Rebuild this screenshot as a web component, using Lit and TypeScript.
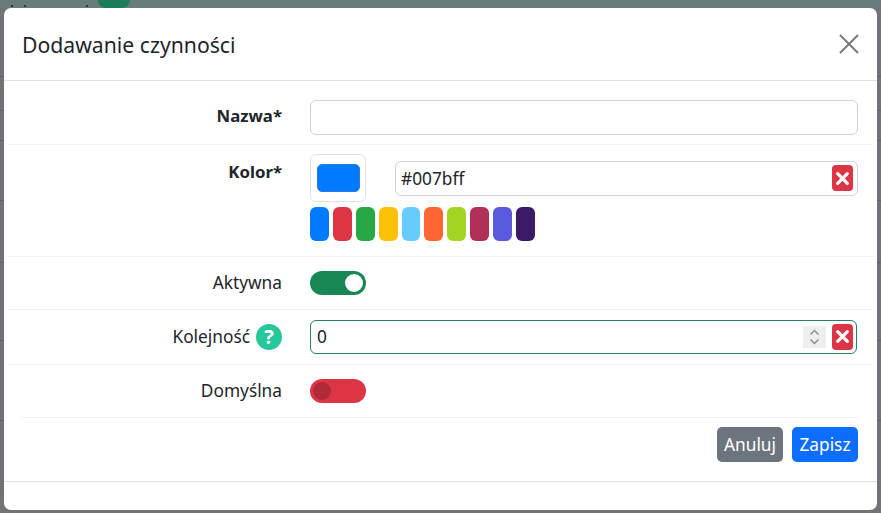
import { LitElement, html, css } from 'lit';
import { customElement } from 'lit/decorators.js';

const SWATCHES = [
  '#007bff', '#dc3545', '#28a745', '#ffc107', '#66ccff',
  '#ff6633', '#a3d323', '#b03058', '#5a5adf', '#3d1a66',
];

@customElement('app-root')
export class AppRoot extends LitElement {
  static styles = css`
    :host {
      display: block;
      position: relative;
      width: 881px;
      height: 513px;
      overflow: hidden;
      background: #717376;
      font-family: 'Noto Sans', 'Open Sans', sans-serif;
      color: #212529;
      font-size: 17.3px;
    }

    * {
      box-sizing: border-box;
    }

    .page-top {
      position: absolute;
      top: 0;
      left: 0;
      right: 0;
      height: 8px;
      background: #687c7c;
    }

    .page-pill {
      position: absolute;
      top: -10px;
      left: 98px;
      width: 32px;
      height: 18px;
      border-radius: 8px;
      background: #1a7d57;
    }

    .page-dot {
      position: absolute;
      top: 5px;
      width: 2px;
      height: 2px;
      background: #2c3436;
    }

    .page-line {
      position: absolute;
      left: 0;
      right: 0;
      height: 1px;
      background: #5f6163;
    }

    .backdrop {
      position: relative;
      height: 513px;
      padding: 8px 4px 3px 4px;
    }

    .modal {
      height: 100%;
      background: #fff;
      border-radius: 7px;
      display: flex;
      flex-direction: column;
    }

    .modal-header {
      height: 73px;
      flex: none;
      border-bottom: 1px solid #dee2e6;
      display: flex;
      align-items: center;
      justify-content: space-between;
      padding: 1px 17px 1px 18px;
    }

    .modal-title {
      font-size: 21.2px;
      font-weight: 400;
      margin: 0;
    }

    .close {
      width: 22px;
      height: 22px;
      display: block;
    }

    .modal-body {
      flex: 1;
      padding: 0 4px;
    }

    .row {
      display: grid;
      grid-template-columns: 274px 1fr;
      column-gap: 28px;
      border-bottom: 1px solid #eff1f3;
      padding-right: 15px;
    }

    .label {
      text-align: right;
      line-height: 24px;
    }

    .label.strong {
      font-size: 16.8px;
      font-weight: 700;
    }

    .row-name {
      height: 64px;
      padding-top: 19px;
      align-items: start;
    }

    .row-name .label {
      padding-top: 4px;
    }

    .input {
      height: 35px;
      border: 1px solid #ced4da;
      border-radius: 6px;
      background: #fff;
      padding: 0 6px;
      display: flex;
      align-items: center;
      color: #212529;
    }

    .row-color {
      height: 112px;
      padding-top: 9px;
    }

    .row-color .label {
      padding-top: 6px;
    }

    .color-top {
      display: flex;
      align-items: center;
      gap: 29px;
    }

    .color-btn {
      width: 56px;
      height: 48px;
      flex: none;
      border: 1px solid #dee2e6;
      border-radius: 6px;
      display: flex;
      align-items: center;
      justify-content: center;
    }

    .color-fill {
      width: 43px;
      height: 28px;
      border-radius: 5px;
      background: #007bff;
      border: 1px solid #2b7bdc;
    }

    .color-input {
      flex: 1;
      justify-content: space-between;
      padding: 0 4px 0 5px;
    }

    .clear {
      width: 21px;
      height: 26px;
      flex: none;
      border-radius: 4px;
      background: #dc3545;
      display: flex;
      align-items: center;
      justify-content: center;
    }

    .clear svg {
      width: 15px;
      height: 15px;
      display: block;
    }

    .swatches {
      display: flex;
      gap: 4px;
      margin-top: 5px;
    }

    .swatch {
      width: 18.9px;
      height: 34px;
      border-radius: 6px;
    }

    .row-switch {
      height: 53px;
      align-items: center;
    }

    .switch {
      width: 56px;
      height: 24px;
      border-radius: 12px;
      display: flex;
      align-items: center;
      padding: 0 3px;
    }

    .switch.on {
      background: #198754;
      justify-content: flex-end;
    }

    .switch.off {
      background: #dc3545;
    }

    .knob {
      width: 18px;
      height: 18px;
      border-radius: 50%;
    }

    .on .knob {
      background: #fff;
    }

    .off .knob {
      background: #b02a37;
    }

    .row-order {
      height: 55px;
      align-items: center;
    }

    .row-order .label {
      display: flex;
      justify-content: flex-end;
      align-items: center;
      gap: 6px;
    }

    .help {
      width: 26px;
      height: 26px;
      border-radius: 50%;
      background: #26c79b;
      color: #fff;
      font-size: 20px;
      font-weight: 700;
      line-height: 26px;
      text-align: center;
    }

    .order-input {
      height: 34px;
      margin: -1px 1px 0 0;
      border-color: #2a7f62;
      justify-content: space-between;
      padding: 0 3px 0 6px;
    }

    .order-tools {
      display: flex;
      align-items: center;
      gap: 6px;
    }

    .spinner {
      width: 23px;
      height: 22px;
      background: #eceef0;
      display: block;
    }

    .row-last {
      margin: 0 15px 0 14px;
      padding-right: 0;
      grid-template-columns: 260px 1fr;
    }

    .actions {
      display: flex;
      justify-content: flex-end;
      gap: 9px;
      padding: 9px 15px 0 0;
    }

    .btn {
      width: 66px;
      height: 35px;
      border-radius: 5px;
      color: #fff;
      display: flex;
      align-items: center;
      justify-content: center;
    }

    .btn.secondary {
      background: #6c757d;
    }

    .btn.primary {
      background: #0d6efd;
    }

    .modal-footer {
      height: 29px;
      flex: none;
      border-top: 1px solid #dee2e6;
    }
  `;

  private clearIcon() {
    return html`<svg viewBox="0 0 14 14">
      <path d="M2.5 2.5l9 9M11.5 2.5l-9 9" stroke="#fff" stroke-width="3" stroke-linecap="round" fill="none"></path>
    </svg>`;
  }

  render() {
    return html`
      <div class="page-top"></div>
      <div class="page-pill"></div>
      <div class="page-dot" style="left:11px"></div>
      <div class="page-dot" style="left:24px"></div>
      <div class="page-dot" style="left:86px"></div>
      ${[76, 110, 140, 200, 262, 340, 420].map(y => html`<div class="page-line" style="top:${y}px"></div>`)}
      <div class="backdrop">
        <div class="modal">
          <div class="modal-header">
            <h5 class="modal-title">Dodawanie czynności</h5>
            <svg class="close" viewBox="0 0 22 22">
              <path d="M2 2l18 18M20 2L2 20" stroke="#7a7a7a" stroke-width="2" fill="none"></path>
            </svg>
          </div>
          <div class="modal-body">
            <div class="row row-name">
              <div class="label strong">Nazwa*</div>
              <div class="input"></div>
            </div>
            <div class="row row-color">
              <div class="label strong">Kolor*</div>
              <div>
                <div class="color-top">
                  <div class="color-btn"><div class="color-fill"></div></div>
                  <div class="input color-input">
                    <span>#007bff</span>
                    <div class="clear">${this.clearIcon()}</div>
                  </div>
                </div>
                <div class="swatches">
                  ${SWATCHES.map(c => html`<div class="swatch" style="background:${c}"></div>`)}
                </div>
              </div>
            </div>
            <div class="row row-switch">
              <div class="label">Aktywna</div>
              <div class="switch on"><div class="knob"></div></div>
            </div>
            <div class="row row-order">
              <div class="label">Kolejność <span class="help">?</span></div>
              <div class="input order-input">
                <span>0</span>
                <div class="order-tools">
                  <svg class="spinner" viewBox="0 0 23 22">
                    <path d="M7.5 8.5l4-4 4 4M7.5 13.5l4 4 4-4" stroke="#8a8f94" stroke-width="1.5" fill="none"></path>
                  </svg>
                  <div class="clear">${this.clearIcon()}</div>
                </div>
              </div>
            </div>
            <div class="row row-switch row-last">
              <div class="label">Domyślna</div>
              <div class="switch off"><div class="knob"></div></div>
            </div>
            <div class="actions">
              <div class="btn secondary">Anuluj</div>
              <div class="btn primary">Zapisz</div>
            </div>
          </div>
          <div class="modal-footer"></div>
        </div>
      </div>
    `;
  }
}

declare global {
  interface HTMLElementTagNameMap {
    'app-root': AppRoot;
  }
}
